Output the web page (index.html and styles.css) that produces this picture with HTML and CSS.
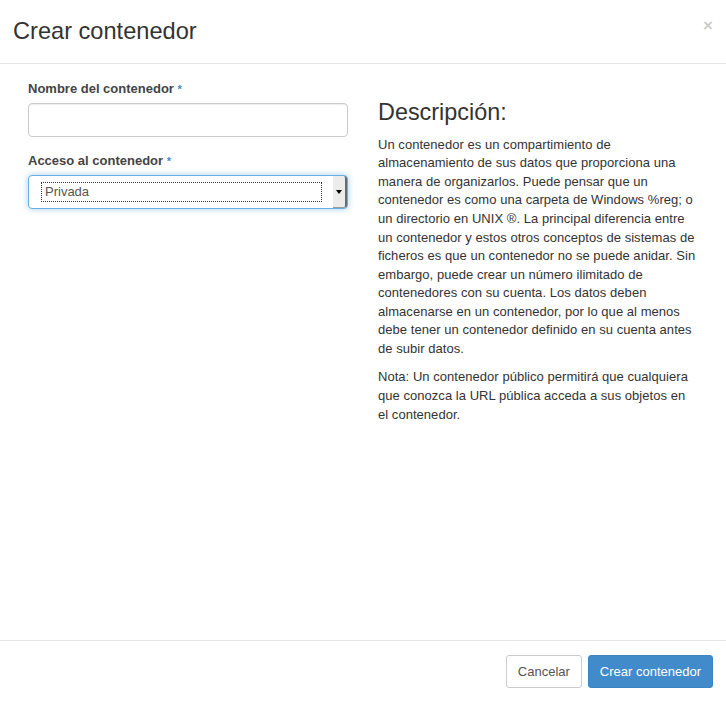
FILE: index.html
```html
<!DOCTYPE html>
<html lang="es">
<head>
<meta charset="utf-8">
<title>Crear contenedor</title>
<link rel="stylesheet" href="styles.css">
</head>
<body>
<div class="modal">
  <div class="modal-header">
    <h3 class="modal-title">Crear contenedor</h3>
    <span class="close">×</span>
  </div>
  <div class="modal-body">
    <div class="col-form">
      <div class="form-group">
        <label class="control-label">Nombre del contenedor <span class="req">*</span></label>
        <div class="form-control"></div>
      </div>
      <div class="form-group">
        <label class="control-label">Acceso al contenedor <span class="req">*</span></label>
        <div class="form-control select">
          <span class="select-value">Privada</span>
          <span class="select-arrow"><span class="caret"></span></span>
        </div>
      </div>
    </div>
    <div class="col-desc">
      <h3 class="desc-title">Descripción:</h3>
      <p>Un contenedor es un compartimiento de almacenamiento de sus datos que proporciona una manera de organizarlos. Puede pensar que un contenedor es como una carpeta de Windows %reg; o un directorio en UNIX ®. La principal diferencia entre un contenedor y estos otros conceptos de sistemas de ficheros es que un contenedor no se puede anidar. Sin embargo, puede crear un número ilimitado de contenedores con su cuenta. Los datos deben almacenarse en un contenedor, por lo que al menos debe tener un contenedor definido en su cuenta antes de subir datos.</p>
      <p>Nota: Un contenedor público permitirá que cualquiera que conozca la URL pública acceda a sus objetos en el contenedor.</p>
    </div>
  </div>
  <div class="modal-footer">
    <span class="btn btn-default">Cancelar</span>
    <span class="btn btn-primary">Crear contenedor</span>
  </div>
</div>
</body>
</html>
```
FILE: styles.css
```css
html, body {
  margin: 0;
  padding: 0;
  background: #fff;
}
body {
  font-family: "Liberation Sans", Arial, sans-serif;
  font-size: 13px;
  line-height: 1.42857;
  color: #333;
}
.modal {
  width: 726px;
  height: 702px;
  display: flex;
  flex-direction: column;
}
.modal-header {
  height: 63px;
  border-bottom: 1px solid #e5e5e5;
  display: flex;
  align-items: flex-start;
  justify-content: space-between;
  padding: 0 13px;
  box-sizing: content-box;
}
.modal-title {
  margin: 14px 0 0;
  font-size: 23.6px;
  font-weight: 400;
  line-height: 34px;
  color: #333;
}
.close {
  margin-top: 17px;
  margin-right: 0;
  font-size: 17px;
  font-weight: 700;
  line-height: 1;
  color: #000;
  opacity: 0.2;
}
.modal-body {
  flex: 1;
  display: flex;
  padding: 0 28px;
  gap: 30px;
}
.col-form {
  width: 320px;
  padding-top: 16px;
}
.form-group {
  margin-bottom: 15px;
}
.control-label {
  display: block;
  font-weight: 700;
  color: #444;
  font-size: 13px;
  line-height: 18px;
  margin-bottom: 5px;
}
.req {
  color: #428bca;
  font-weight: 700;
  font-size: 11px;
}
.form-control {
  height: 34px;
  box-sizing: border-box;
  border: 1px solid #ccc;
  border-radius: 4px;
  box-shadow: inset 0 1px 1px rgba(0,0,0,0.075);
  background: #fff;
}
.select {
  border-color: #66afe9;
  box-shadow: 0 0 6px rgba(102,175,233,0.6);
  display: flex;
  align-items: stretch;
  padding: 6px 0 6px 12px;
  position: relative;
}
.select-value {
  flex: 1;
  border: 1px dotted #333;
  font-size: 13px;
  line-height: 18px;
  padding-left: 3px;
  color: #555;
  margin-right: 25px;
}
.select-arrow {
  position: absolute;
  right: 0;
  top: 0;
  bottom: 0;
  width: 14px;
  background: #ececec;
  border-right: 2px solid #6a6a6a;
  border-bottom: 1px solid #9a9a9a;
  border-radius: 0 3px 3px 0;
  display: flex;
  align-items: center;
  justify-content: center;
  box-sizing: border-box;
}
.caret {
  width: 0;
  height: 0;
  border-left: 3px solid transparent;
  border-right: 3px solid transparent;
  border-top: 4px solid #000;
}
.col-desc {
  flex: 1;
  padding-top: 36px;
}
.desc-title {
  margin: 0 0 10px;
  font-size: 23.4px;
  font-weight: 400;
  line-height: 1.1;
  color: #333;
}
.col-desc p {
  margin: 0 0 10px;
  letter-spacing: 0.04px;
}
.modal-footer {
  height: 62px;
  border-top: 1px solid #e5e5e5;
  display: flex;
  justify-content: flex-end;
  align-items: flex-start;
  padding: 14px 13px 0 0;
  gap: 6px;
  box-sizing: border-box;
}
.btn {
  display: inline-block;
  height: 33px;
  box-sizing: border-box;
  padding: 0 11px;
  font-size: 13px;
  line-height: 31px;
  border: 1px solid transparent;
  border-radius: 3px;
}
.btn-default {
  border-color: #ccc;
  color: #555;
  background: #fff;
}
.btn-primary {
  background: #428bca;
  border-color: #3c84c2;
  color: #fff;
}
```
